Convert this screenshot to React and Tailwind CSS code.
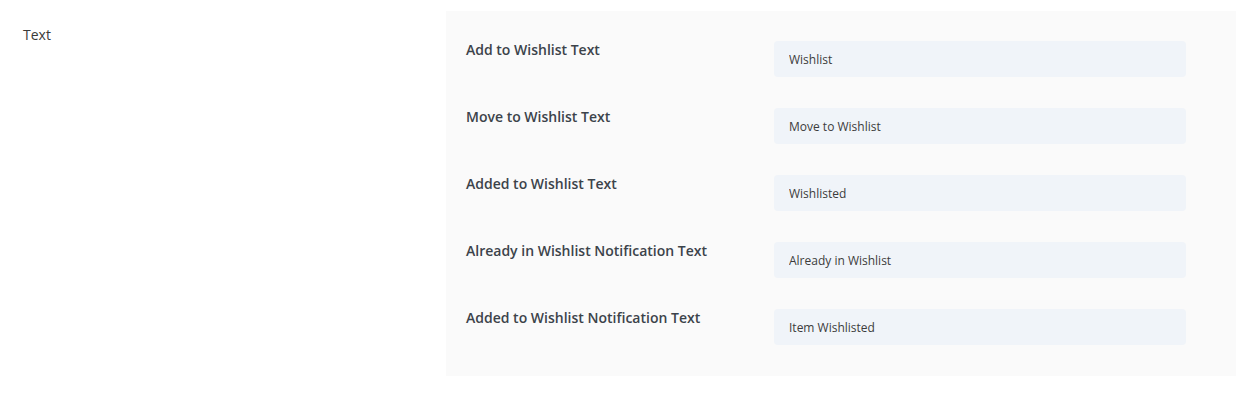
import React from 'react';

const fields = [
  { label: 'Add to Wishlist Text', value: 'Wishlist' },
  { label: 'Move to Wishlist Text', value: 'Move to Wishlist' },
  { label: 'Added to Wishlist Text', value: 'Wishlisted' },
  { label: 'Already in Wishlist Notification Text', value: 'Already in Wishlist' },
  { label: 'Added to Wishlist Notification Text', value: 'Item Wishlisted' },
];

export default function App() {
  return (
    <div
      className="flex bg-white pt-[11px] pr-[10px] text-[#3c3c3c]"
      style={{ fontFamily: '"Open Sans", "Noto Sans", sans-serif' }}
    >
      <div className="w-[446px] shrink-0 pl-[23px] pt-[14px]">
        <h3 className="text-[14px] font-medium leading-[20px] text-[#3a3a3a]">Text</h3>
      </div>
      <div className="flex-1 bg-[#fafafa] pl-[20px] pr-[50px] pt-[30px] pb-[31px]">
        <div className="flex flex-col gap-[31px]">
          {fields.map((f) => (
            <div key={f.label} className="flex items-start">
              <label className="w-[308px] shrink-0 pt-[1px] text-[14px] font-semibold leading-[16px] text-[#3c434a]">
                {f.label}
              </label>
              <input
                type="text"
                defaultValue={f.value}
                className="h-[36px] flex-1 rounded-[4px] bg-[#f0f4f9] px-[15px] text-[12px] text-[#3c3c3c] outline-none"
              />
            </div>
          ))}
        </div>
      </div>
    </div>
  );
}
